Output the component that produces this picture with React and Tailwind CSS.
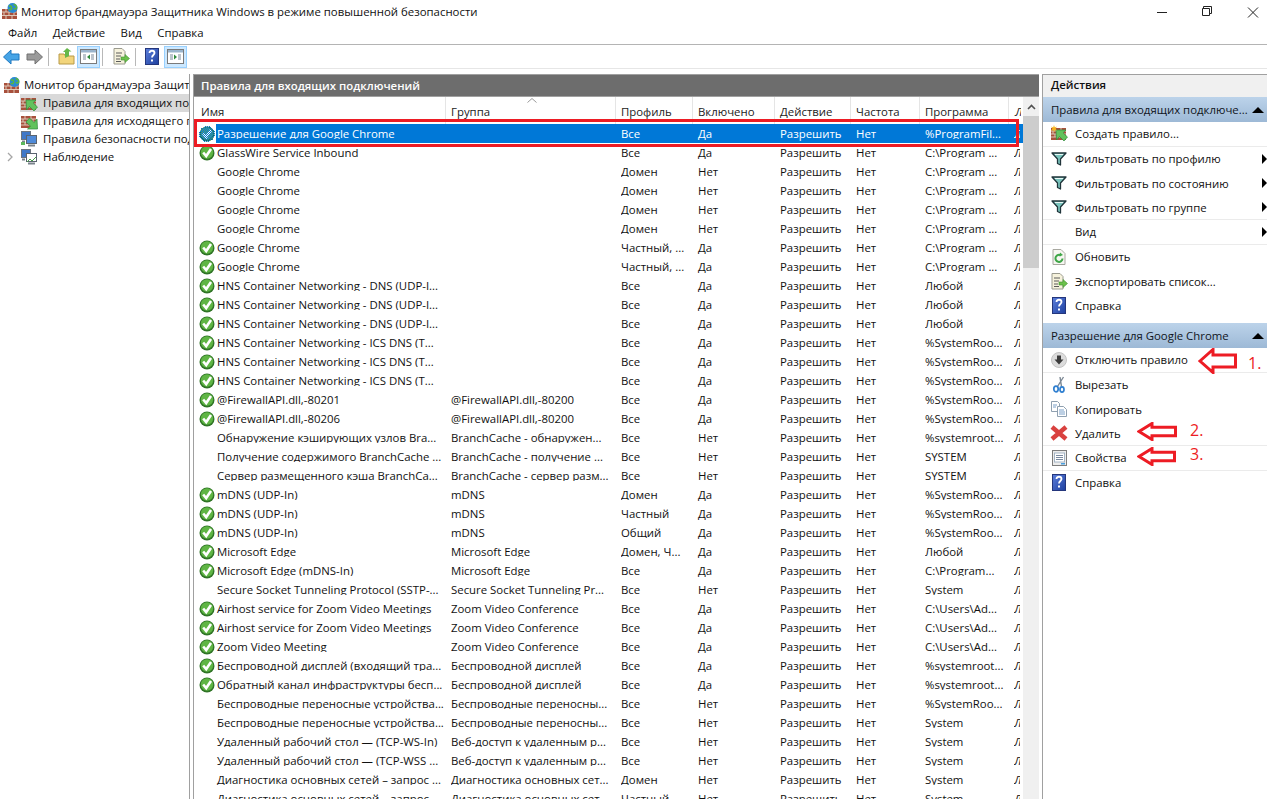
import React from 'react'

const Check = () => (
  <svg width="16" height="16" viewBox="0 0 16 16" className="shrink-0">
    <circle cx="8" cy="8" r="7.5" fill="#2f7426" />
    <circle cx="8" cy="7.5" r="6.2" fill="#5fb544" />
    <path d="M4.200 7.500l3 3.500L12 4" fill="none" stroke="#fff" strokeWidth="2.600" />
  </svg>
)

// the selected row's icon gets the dithered highlight over it
const CheckBlue = () => (
  <svg width="16" height="16" viewBox="0 0 16 16" className="shrink-0">
    <defs>
      <pattern id="dither" width="2" height="2" patternUnits="userSpaceOnUse">
        <rect width="1" height="1" fill="#0078d7" />
        <rect x="1" y="1" width="1" height="1" fill="#0078d7" />
      </pattern>
    </defs>
    <circle cx="8" cy="8" r="7.5" fill="#2f7426" />
    <circle cx="8" cy="7.5" r="6.2" fill="#4f9f74" />
    <path d="M4.200 7.500l3 3.500L12 4" fill="none" stroke="#fff" strokeWidth="2.600" />
    <circle cx="8" cy="8" r="8" fill="url(#dither)" shapeRendering="crispEdges" />
  </svg>
)

const Brick = ({ globe, arrow, star, out }) => (
  <svg width="18" height="17" viewBox="0 0 18 17" className="shrink-0">
    <rect x="1" y={globe ? 6 : 3} width="15" height={globe ? 10 : 12} fill="#a8503c" />
    <path d={globe ? 'M1 9h15M1 12.500h15M5 6v3M11 6v3M3 9v3.500M8 9v3.500M13 9v3.500M5 12.500v3.500M11 12.500v3.500' : 'M1 6h15M1 9h15M1 12h15M5 3v3M11 3v3M3 6v3M8 6v3M13 6v3M5 9v3M11 9v3'} stroke="#dcc8b8" strokeWidth="1" />
    {globe && <circle cx="11.500" cy="5" r="5" fill="#2a8ad4" />}
    {globe && <path d="M8 3.500c2-1.500 3 .5 2.500 2S8.500 7 8 6M12.500 1.500c2 0 3.500 2 3 3.500s-2 1-2.500 0" stroke="#5ab53f" strokeWidth="1.600" fill="none" />}
    {arrow && !out && <path d="M6 5h10l-3 2.800L17.500 12 14 16l-4.500-4.500L6.500 15z" fill="#62c25c" stroke="#2f8a3c" strokeWidth="0.700" />}
    {arrow && out && <path d="M17.500 16h-10l3-2.800L6 9l3.500-4L14 9.500 17 6z" fill="#62c25c" stroke="#2f8a3c" strokeWidth="0.700" />}
    {star && <path d="M4 0l.8 2.400L7 1.500 5.600 3.600 7 5.700 4.800 4.900 4 7.200 3.200 4.900 1 5.700l1.400-2.100L1 1.500l2.200.9z" fill="#f6b21a" />}
  </svg>
)

const Monitors = ({ chart }) => (
  <svg width="18" height="16" viewBox="0 0 18 16" className="shrink-0">
    <rect x="1.500" y="0.500" width="9" height="8" fill="#3f78c8" stroke="#6a7480" />
    <rect x="6.500" y="4.500" width="10" height="8" fill={chart ? '#fff' : '#4f8ad8'} stroke="#5a6470" />
    <path d="M8 14.500h7M2 10.500h3" stroke="#7a838c" strokeWidth="2" />
    {chart ? <path d="M7 13l3-3 2 2 4-4" stroke="#4aa04a" fill="none" /> : <rect x="1" y="11" width="4" height="3" fill="#5cb85c" />}
  </svg>
)

const Help = () => (
  <svg width="14" height="17" viewBox="0 0 14 17" className="shrink-0">
    <defs>
      <linearGradient id="helpBlue" x1="0" y1="0" x2="1" y2="1">
        <stop offset="0" stopColor="#5c7fdc" />
        <stop offset="1" stopColor="#1d3f9e" />
      </linearGradient>
    </defs>
    <rect x="0.500" y="0.500" width="13" height="16" fill="url(#helpBlue)" stroke="#24367c" />
    <path d="M4.500 5c0-3 5-3 5 0 0 2-2.500 2-2.500 4.500" fill="none" stroke="#fff" strokeWidth="1.800" />
    <rect x="6" y="11.500" width="2" height="2" fill="#fff" />
  </svg>
)

const Funnel = () => (
  <svg width="16" height="14" viewBox="0 0 16 14" className="shrink-0">
    <path d="M1 1h14L9.500 7v6l-3-1.500V7z" fill="#79c4bd" stroke="#20343a" strokeWidth="1.300" strokeLinejoin="round" />
    <path d="M4 2.500h8" stroke="#e8f6f4" />
  </svg>
)

const Refresh = () => (
  <svg width="14" height="16" viewBox="0 0 14 16" className="shrink-0">
    <path d="M1 .5h8l4 4v11H1z" fill="#f7f7f2" stroke="#a8a8a0" />
    <path d="M10.500 9.500a3.500 3.500 0 1 1-1.500-3" fill="none" stroke="#3fa648" strokeWidth="2" />
    <path d="M8 3.500l3 2.500-3.500 1.500z" fill="#3fa648" />
  </svg>
)

const ExportList = () => (
  <svg width="17" height="17" viewBox="0 0 17 17" className="shrink-0">
    <path d="M1 .5h8l3 3v12.500H1z" fill="#f6f2dc" stroke="#9a9a8e" />
    <path d="M3 5h6M3 8h5M3 11h4M3 13.500h5" stroke="#5a5a5a" />
    <path d="M8 9h4V6.500l4.500 4-4.500 4V12H8z" fill="#6cc04a" stroke="#3f9030" strokeWidth="0.600" />
  </svg>
)

const Disable = () => (
  <svg width="16" height="16" viewBox="0 0 16 16" className="shrink-0">
    <circle cx="8" cy="8" r="7.500" fill="#dcdcdc" stroke="#c4c4c4" />
    <path d="M6 3.500h4v4h2.500L8 12.500 3.500 7.500H6z" fill="#3c3c3c" />
  </svg>
)

const Scissors = () => (
  <svg width="14" height="17" viewBox="0 0 14 17" className="shrink-0">
    <path d="M11.500 1L5.500 10.500M8 1l1.500 9.500" stroke="#7c8894" strokeWidth="1.400" />
    <ellipse cx="4" cy="13" rx="2.200" ry="2.800" fill="none" stroke="#2f7fd0" strokeWidth="1.700" />
    <ellipse cx="10" cy="13.500" rx="2" ry="2.600" fill="none" stroke="#2f7fd0" strokeWidth="1.700" />
  </svg>
)

const Copy = () => (
  <svg width="16" height="16" viewBox="0 0 16 16" className="shrink-0">
    <path d="M.5.5h6l2 2v8h-8z" fill="#fff" stroke="#8fa0b0" />
    <path d="M6.500 5.500h6l3 3v7h-9z" fill="#fff" stroke="#8fa0b0" />
    <path d="M2 4h4M2 6h3M8 9h5M8 11h6M8 13h6" stroke="#7aa0c8" />
  </svg>
)

const Cross = () => (
  <svg width="18" height="16" viewBox="0 0 18 16" className="shrink-0">
    <path d="M2 2l14 12M16 2L2 14" stroke="#d9413f" strokeWidth="4.500" />
  </svg>
)

const Props = () => (
  <svg width="15" height="16" viewBox="0 0 15 16" className="shrink-0">
    <rect x="0.500" y="0.500" width="14" height="15" fill="#ececec" stroke="#7c7c7c" />
    <rect x="2.500" y="3" width="10" height="9" fill="#fff" stroke="#a4b4c4" />
    <path d="M4 5.500h7M4 7.500h7M4 9.500h7" stroke="#7a8aa0" />
    <rect x="9" y="13" width="4" height="1.500" fill="#4aa0e0" />
  </svg>
)

const PaneIcon = ({ right }) => (
  <div className="flex h-[22px] w-[23px] items-center justify-center border border-[#99d1ff] bg-[#cce8ff]">
    <svg width="17" height="15" viewBox="0 0 17 15">
      <rect x="0.500" y="0.500" width="16" height="14" fill="#fff" stroke="#7a7a7a" />
      <rect x="1" y="1" width="15" height="2.500" fill="#9ab4cc" />
      <path d="M3 6h3M3 8h3M3 10h3M11 6h3M11 8h3M11 10h3" stroke="#7a8a9a" />
      <path d={right ? 'M7 5.500l3 2.500-3 2.500z' : 'M10 5.500l-3 2.500 3 2.500z'} fill="#2f8a3c" />
    </svg>
  </div>
)

// hand-drawn callout arrow pointing left, w and h are the outer size
const RedArrow = ({ w, h }) => {
  const m = h / 2
  const q = h * 0.27
  return (
    <svg width={w} height={h} viewBox={`0 0 ${w} ${h}`} className="absolute left-0 top-0">
      <path d={`M2 ${m}L15 1.500V${q}H${w - 1.500}V${h - q}H15V${h - 1.500}z`} fill="#fff" stroke="#ed1c24" strokeWidth="3" />
    </svg>
  )
}

const rows = [
  ['b', 'Разрешение для Google Chrome', '', 'Все', 'Да', '%ProgramFil...'],
  ['c', 'GlassWire Service Inbound', '', 'Все', 'Да', 'C:\\Program ...'],
  ['', 'Google Chrome', '', 'Домен', 'Нет', 'C:\\Program ...'],
  ['', 'Google Chrome', '', 'Домен', 'Нет', 'C:\\Program ...'],
  ['', 'Google Chrome', '', 'Домен', 'Нет', 'C:\\Program ...'],
  ['', 'Google Chrome', '', 'Домен', 'Нет', 'C:\\Program ...'],
  ['c', 'Google Chrome', '', 'Частный, ...', 'Да', 'C:\\Program ...'],
  ['c', 'Google Chrome', '', 'Частный, ...', 'Да', 'C:\\Program ...'],
  ['c', 'HNS Container Networking - DNS (UDP-I...', '', 'Все', 'Да', 'Любой'],
  ['c', 'HNS Container Networking - DNS (UDP-I...', '', 'Все', 'Да', 'Любой'],
  ['c', 'HNS Container Networking - DNS (UDP-I...', '', 'Все', 'Да', 'Любой'],
  ['c', 'HNS Container Networking - ICS DNS (T...', '', 'Все', 'Да', '%SystemRoo...'],
  ['c', 'HNS Container Networking - ICS DNS (T...', '', 'Все', 'Да', '%SystemRoo...'],
  ['c', 'HNS Container Networking - ICS DNS (T...', '', 'Все', 'Да', '%SystemRoo...'],
  ['c', '@FirewallAPI.dll,-80201', '@FirewallAPI.dll,-80200', 'Все', 'Да', '%SystemRoo...'],
  ['c', '@FirewallAPI.dll,-80206', '@FirewallAPI.dll,-80200', 'Все', 'Да', '%SystemRoo...'],
  ['', 'Обнаружение кэширующих узлов Bra...', 'BranchCache - обнаружен...', 'Все', 'Нет', '%systemroot...'],
  ['', 'Получение содержимого BranchCache ...', 'BranchCache - получение ...', 'Все', 'Нет', 'SYSTEM'],
  ['', 'Сервер размещенного кэша BranchCa...', 'BranchCache - сервер разм...', 'Все', 'Нет', 'SYSTEM'],
  ['c', 'mDNS (UDP-In)', 'mDNS', 'Домен', 'Да', '%SystemRoo...'],
  ['c', 'mDNS (UDP-In)', 'mDNS', 'Частный', 'Да', '%SystemRoo...'],
  ['c', 'mDNS (UDP-In)', 'mDNS', 'Общий', 'Да', '%SystemRoo...'],
  ['c', 'Microsoft Edge', 'Microsoft Edge', 'Домен, Ч...', 'Да', 'Любой'],
  ['c', 'Microsoft Edge (mDNS-In)', 'Microsoft Edge', 'Все', 'Да', 'C:\\Program...'],
  ['', 'Secure Socket Tunneling Protocol (SSTP-...', 'Secure Socket Tunneling Pr...', 'Все', 'Нет', 'System'],
  ['c', 'Airhost service for Zoom Video Meetings', 'Zoom Video Conference', 'Все', 'Да', 'C:\\Users\\Ad...'],
  ['c', 'Airhost service for Zoom Video Meetings', 'Zoom Video Conference', 'Все', 'Да', 'C:\\Users\\Ad...'],
  ['c', 'Zoom Video Meeting', 'Zoom Video Conference', 'Все', 'Да', 'C:\\Users\\Ad...'],
  ['c', 'Беспроводной дисплей (входящий тра...', 'Беспроводной дисплей', 'Все', 'Да', '%systemroot...'],
  ['c', 'Обратный канал инфраструктуры бесп...', 'Беспроводной дисплей', 'Все', 'Да', '%systemroot...'],
  ['', 'Беспроводные переносные устройства...', 'Беспроводные переносны...', 'Все', 'Нет', '%SystemRoo...'],
  ['', 'Беспроводные переносные устройства...', 'Беспроводные переносны...', 'Все', 'Нет', 'System'],
  ['', 'Удаленный рабочий стол — (TCP-WS-In)', 'Веб-доступ к удаленным р...', 'Все', 'Нет', 'System'],
  ['', 'Удаленный рабочий стол — (TCP-WSS ...', 'Веб-доступ к удаленным р...', 'Все', 'Нет', 'System'],
  ['', 'Диагностика основных сетей – запрос ...', 'Диагностика основных сет...', 'Домен', 'Нет', 'System'],
  ['', 'Диагностика основных сетей – запрос ...', 'Диагностика основных сет...', 'Частный', 'Нет', 'System'],
]

const Row = ({ row, selected }) => (
  <div className="flex h-[19px] items-center whitespace-nowrap">
    <div className="flex w-[22px] shrink-0 justify-end pr-[1px]">
      {row[0] === 'c' && <Check />}
      {row[0] === 'b' && <CheckBlue />}
    </div>
    <div className={`flex h-full flex-1 items-center ${selected ? 'bg-[#0078d7] text-white' : ''}`}>
      <div className="w-[235px] shrink-0 overflow-hidden pl-[1px]">{row[1]}</div>
      <div className="w-[170px] shrink-0 overflow-hidden">{row[2]}</div>
      <div className="w-[77px] shrink-0 overflow-hidden">{row[3]}</div>
      <div className="w-[82px] shrink-0">{row[4]}</div>
      <div className="w-[76px] shrink-0">Разрешить</div>
      <div className="w-[69px] shrink-0">Нет</div>
      <div className="w-[89px] shrink-0 overflow-hidden">{row[5]}</div>
      <div className="w-[6px] overflow-hidden italic">Л</div>
    </div>
  </div>
)

const TreeItem = ({ icon, children, selected, caret }) => (
  <div className="flex h-[18px] items-center whitespace-nowrap">
    <div className="flex w-[20px] shrink-0 items-center justify-center text-[#a6a6a6]">
      {caret && <svg width="6" height="10" viewBox="0 0 6 10"><path d="M1 1l4 4-4 4" fill="none" stroke="#a6a6a6" strokeWidth="1.300" /></svg>}
    </div>
    <div className={`flex h-full flex-1 items-center gap-[5px] overflow-hidden ${selected ? 'bg-[#d9d9d9]' : ''}`}>
      {icon}
      <span>{children}</span>
    </div>
  </div>
)

const Action = ({ icon, children, sub, line, arrow }) => (
  <div className={`relative flex h-[24.500px] items-center whitespace-nowrap ${line ? 'border-b border-[#ebebeb]' : ''}`}>
    <div className="flex w-[32px] shrink-0 justify-center">{icon}</div>
    <span>{children}</span>
    {sub && <div className="absolute right-0 h-0 w-0 border-y-[5px] border-l-[5px] border-y-transparent border-l-black" />}
    {arrow}
  </div>
)

const GroupHead = ({ children, className }) => (
  <div className={`flex items-center justify-between bg-gradient-to-b from-[#bcd3ea] to-[#9db9d6] pl-[8px] pr-[3px] text-[#10151c] ${className}`}>
    <span className="whitespace-nowrap">{children}</span>
    <div className="h-0 w-0 border-x-[6px] border-b-[6px] border-x-transparent border-b-black" />
  </div>
)

const headerCols = [
  ['w-[252px]', 'pl-[7px]', 'Имя'],
  ['w-[170px]', 'pl-[5px]', 'Группа'],
  ['w-[77px]', 'pl-[5px]', 'Профиль'],
  ['w-[82px]', 'pl-[5px]', 'Включено'],
  ['w-[76px]', 'pl-[5px]', 'Действие'],
  ['w-[69px]', 'pl-[5px]', 'Частота'],
  ['w-[89px]', 'pl-[5px]', 'Программа'],
]

export default function App() {
  return (
    <div className="relative flex h-screen w-full flex-col overflow-hidden bg-white font-['Open_Sans',sans-serif] text-[11.400px] leading-none text-[#111]">
      <div className="flex h-[22px] shrink-0 items-center gap-[2px] pl-[1px]">
        <Brick globe />
        <span className="pt-[2px]">Монитор брандмауэра Защитника Windows в режиме повышенной безопасности</span>
        <div className="ml-auto flex items-center">
          <svg width="167" height="16" viewBox="0 0 167 16">
            <path d="M57 9.500h10M103.500 5.500v-2h8v7h-2M102.500 5.500h7v7h-7z" fill="none" stroke="#222" />
            <path d="M148 4.500l10 10M158 4.500l-10 10" stroke="#222" />
          </svg>
        </div>
      </div>
      <div className="box-content flex h-[22px] shrink-0 items-center gap-[15.500px] border-b border-[#b4b4b4] pl-[8px]">
        <span>Файл</span>
        <span>Действие</span>
        <span>Вид</span>
        <span>Справка</span>
      </div>
      <div className="flex h-[24px] shrink-0 items-center border-b border-[#e6e6e6] pl-[3px]">
        <svg width="42" height="16" viewBox="0 0 42 16">
          <path d="M.5 8l7.500-7v4h8v6H8v4z" fill="#46a4e6" stroke="#1f78c0" />
          <path d="M39.500 8L32 1v4h-8v6h8v4z" fill="#9a9a9a" stroke="#707070" />
        </svg>
        <div className="mx-[3px] h-[18px] w-px bg-[#b8b8b8]" />
        <div className="ml-[6px] flex w-[19px]">
          <svg width="18" height="17" viewBox="0 0 18 17">
            <path d="M1 6h5l1.500 2H16v8H1z" fill="#f2d57c" stroke="#b89a48" />
            <path d="M7 10V4H5l4-4 4.500 3.500H11V8z" fill="#66b84a" />
          </svg>
        </div>
        <PaneIcon />
        <div className="mx-[2px] h-[18px] w-px bg-[#b8b8b8]" />
        <div className="ml-[8px]"><ExportList /></div>
        <div className="mx-[5px] h-[18px] w-px bg-[#b8b8b8]" />
        <div className="ml-[4px] mr-[5px] flex"><Help /></div>
        <PaneIcon right />
      </div>
      <div className="flex min-h-0 flex-1 gap-[3px] pt-[5px]">
        <div className="w-[190px] shrink-0 overflow-hidden border-r border-[#a0a0a0] pt-[2px]">
          <div className="flex h-[18px] items-center gap-[3px] pl-[3px] whitespace-nowrap">
            <Brick globe />
            <span>Монитор брандмауэра Защитника</span>
          </div>
          <TreeItem icon={<Brick arrow />} selected>Правила для входящих подключений</TreeItem>
          <TreeItem icon={<Brick arrow out />}>Правила для исходящего подключения</TreeItem>
          <TreeItem icon={<Monitors />}>Правила безопасности подключения</TreeItem>
          <TreeItem icon={<Monitors chart />} caret>Наблюдение</TreeItem>
        </div>
        <div className="flex w-[846px] shrink-0 flex-col overflow-hidden border-l border-t border-[#a0a0a0]">
          <div className="flex h-[21px] shrink-0 items-center bg-[#6d6d6d] pl-[7px] font-semibold text-white">
            Правила для входящих подключений
          </div>
          <div className="flex min-h-0 flex-1 border-t border-[#a0a0a0]">
            <div className="min-w-0 flex-1 overflow-hidden">
              <div className="relative flex h-[27px] items-center text-[#222]">
                {headerCols.map(([w, pl, label]) => (
                  <div key={label} className={`flex h-full shrink-0 items-center border-r border-[#e5e5e5] pt-[2px] ${w} ${pl}`}>{label}</div>
                ))}
                <div className="flex h-full w-[12px] items-center overflow-hidden pl-[6px] pt-[2px] italic">Л</div>
                <svg width="10" height="5" viewBox="0 0 10 5" className="absolute left-[333px] top-[1px]">
                  <path d="M.5 4.500L5 .5l4.500 4" fill="none" stroke="#9a9a9a" />
                </svg>
              </div>
              {rows.map((row, i) => (
                <Row key={i} row={row} selected={i === 0} />
              ))}
            </div>
            <div className="flex w-[16px] shrink-0 flex-col bg-[#f0f0f0]">
              <div className="flex h-[19px] items-center justify-center">
                <svg width="9" height="6" viewBox="0 0 9 6"><path d="M1 5l3.500-3.500L8 5" fill="none" stroke="#505050" strokeWidth="1.600" /></svg>
              </div>
              <div className="h-[152px] w-full bg-[#cdcdcd]" />
            </div>
          </div>
        </div>
        <div className="min-w-0 flex-1 overflow-hidden border-l border-t border-[#a0a0a0]">
          <div className="flex h-[22px] items-center bg-[#f0f0f0] pb-[2px] pl-[8px] font-semibold">Действия</div>
          <GroupHead className="h-[25px]">Правила для входящих подключе...</GroupHead>
          <Action icon={<Brick arrow star />} line>Создать правило...</Action>
          <Action icon={<Funnel />} sub>Фильтровать по профилю</Action>
          <Action icon={<Funnel />} sub>Фильтровать по состоянию</Action>
          <Action icon={<Funnel />} sub line>Фильтровать по группе</Action>
          <Action sub line>Вид</Action>
          <Action icon={<Refresh />}>Обновить</Action>
          <Action icon={<ExportList />}>Экспортировать список...</Action>
          <Action icon={<Help />}>Справка</Action>
          <GroupHead className="mt-[5px] h-[25px]">Разрешение для Google Chrome</GroupHead>
          <Action icon={<Disable />} line arrow={
            <>
              <div className="absolute left-[155px] top-0"><RedArrow w={39} h={26} /></div>
              <span className="absolute left-[205px] top-[7px] text-[16px] text-[#ed1c24]">1.</span>
            </>
          }>Отключить правило</Action>
          <Action icon={<Scissors />}>Вырезать</Action>
          <Action icon={<Copy />}>Копировать</Action>
          <Action icon={<Cross />} line arrow={
            <>
              <div className="absolute left-[94px] top-0"><RedArrow w={40} h={19} /></div>
              <span className="absolute left-[147px] top-0 text-[16px] text-[#ed1c24]">2.</span>
            </>
          }>Удалить</Action>
          <Action icon={<Props />} line arrow={
            <>
              <div className="absolute left-[94px] top-[1px]"><RedArrow w={39} h={19} /></div>
              <span className="absolute left-[147px] top-0 text-[16px] text-[#ed1c24]">3.</span>
            </>
          }>Свойства</Action>
          <Action icon={<Help />}>Справка</Action>
        </div>
      </div>
      <div className="pointer-events-none absolute left-[194px] top-[119px] h-[28px] w-[825px] border-[3px] border-[#ed1c24]" />
    </div>
  )
}
